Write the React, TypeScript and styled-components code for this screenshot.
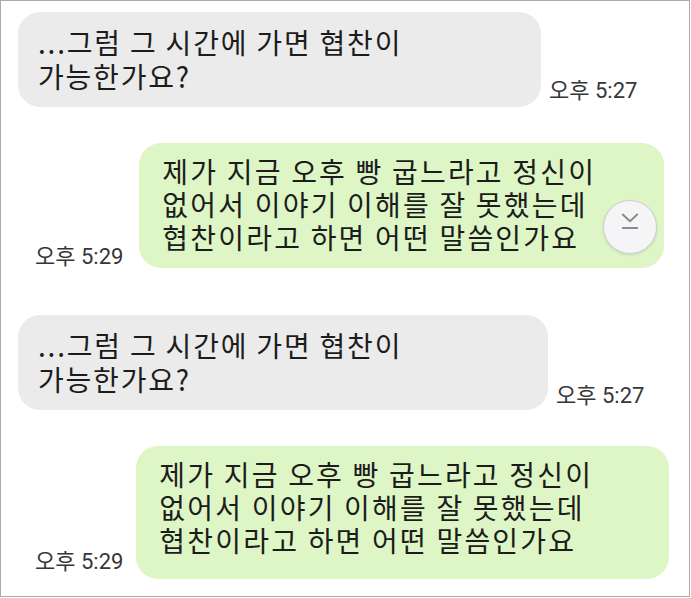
import React from 'react';
import styled, { createGlobalStyle } from 'styled-components';

const GlobalStyle = createGlobalStyle`
  html, body {
    margin: 0;
    padding: 0;
    background: #fff;
  }
  body {
    font-family: "Noto Sans CJK KR", "Noto Sans", sans-serif;
  }
`;

type Message = {
    lines: string[];
    time: string;
};

const incoming: Message = {
    lines: ['...그럼 그 시간에 가면 협찬이', '가능한가요?'],
    time: '오후 5:27',
};

const outgoing: Message = {
    lines: ['제가 지금 오후 빵 굽느라고 정신이', '없어서 이야기 이해를 잘 못했는데', '협찬이라고 하면 어떤 말씀인가요'],
    time: '오후 5:29',
};

// 두 번 캡처된 같은 대화, 아래쪽이 살짝 더 크게 찍힘
const shots = [
    { inW: 523, outW: 525, outPb: 14, outGap: 16, inLift: 4, outLift: -1, scroll: true },
    { inW: 530, outW: 533, outPb: 22, outGap: 13, inLift: 2, outLift: 5, scroll: false },
];

export default function App() {
    return <>
        <GlobalStyle />
        <Frame>
            {shots.map((s, i) => (
                <Pair key={i}>
                    <Row $gap={8}>
                        <InBubble $w={s.inW}>
                            {incoming.lines.map(l => <Line key={l}>{l}</Line>)}
                        </InBubble>
                        <Time $lift={s.inLift}>{incoming.time}</Time>
                    </Row>
                    <Row $out $gap={s.outGap}>
                        <Time $lift={s.outLift}>{outgoing.time}</Time>
                        <OutBubble $w={s.outW} $pb={s.outPb}>
                            {outgoing.lines.map(l => <Line key={l}>{l}</Line>)}
                        </OutBubble>
                        {s.scroll && <ScrollDown>
                            <svg width="54" height="54" viewBox="0 0 54 54">
                                <polyline points="19.5,14 27,21 34.5,14" fill="none" stroke="#8a8a8a" strokeWidth="2" strokeLinecap="round" strokeLinejoin="round" />
                                <line x1="19.5" y1="28" x2="34.5" y2="28" stroke="#8a8a8a" strokeWidth="2" strokeLinecap="round" />
                            </svg>
                        </ScrollDown>}
                    </Row>
                </Pair>
            ))}
        </Frame>
    </>;
}

const Frame = styled.div`
    box-sizing: border-box;
    width: 690px;
    height: 597px;
    border: 1px solid #ababab;
    background: #fff;
    padding: 11px 0 0 17px;
    display: flex;
    flex-direction: column;
    gap: 47px;
    overflow: hidden;
`;

const Pair = styled.section`
    display: flex;
    flex-direction: column;
    gap: 36px;
`;

const Row = styled.div<{ $out?: boolean; $gap: number }>`
    position: relative;
    display: flex;
    align-items: flex-end;
    gap: ${p => p.$gap}px;
    padding-left: ${p => p.$out ? '17px' : '0'};
`;

const BubbleBase = styled.div<{ $w: number }>`
    box-sizing: border-box;
    width: ${p => p.$w}px;
    border-radius: 22px;
    color: #1c1c1c;
    font-size: 28px;
`;

const InBubble = styled(BubbleBase)`
    background: #ebebeb;
    padding: 13px 20px 14px;
    line-height: 34px;
    letter-spacing: 1.8px;
`;

const OutBubble = styled(BubbleBase)<{ $pb: number }>`
    background: #def6c6;
    padding: 12px 22px ${p => p.$pb}px 23px;
    line-height: 33px;
    letter-spacing: 2.2px;
`;

const Line = styled.div`
    white-space: nowrap;
`;

const Time = styled.div<{ $lift: number }>`
    font-family: Roboto, "Noto Sans CJK KR", sans-serif;
    font-size: 22px;
    line-height: 24px;
    color: #363636;
    white-space: nowrap;
    margin-bottom: ${p => p.$lift}px;
`;

const ScrollDown = styled.div`
    position: absolute;
    left: 585px;
    top: 57px;
    width: 54px;
    height: 54px;
    box-sizing: border-box;
    border-radius: 50%;
    border: 1px solid #cfcfcf;
    background: #f5f5f7;
    box-shadow: 0 1px 3px rgba(0, 0, 0, 0.12);
    display: flex;
    align-items: center;
    justify-content: center;
`;
